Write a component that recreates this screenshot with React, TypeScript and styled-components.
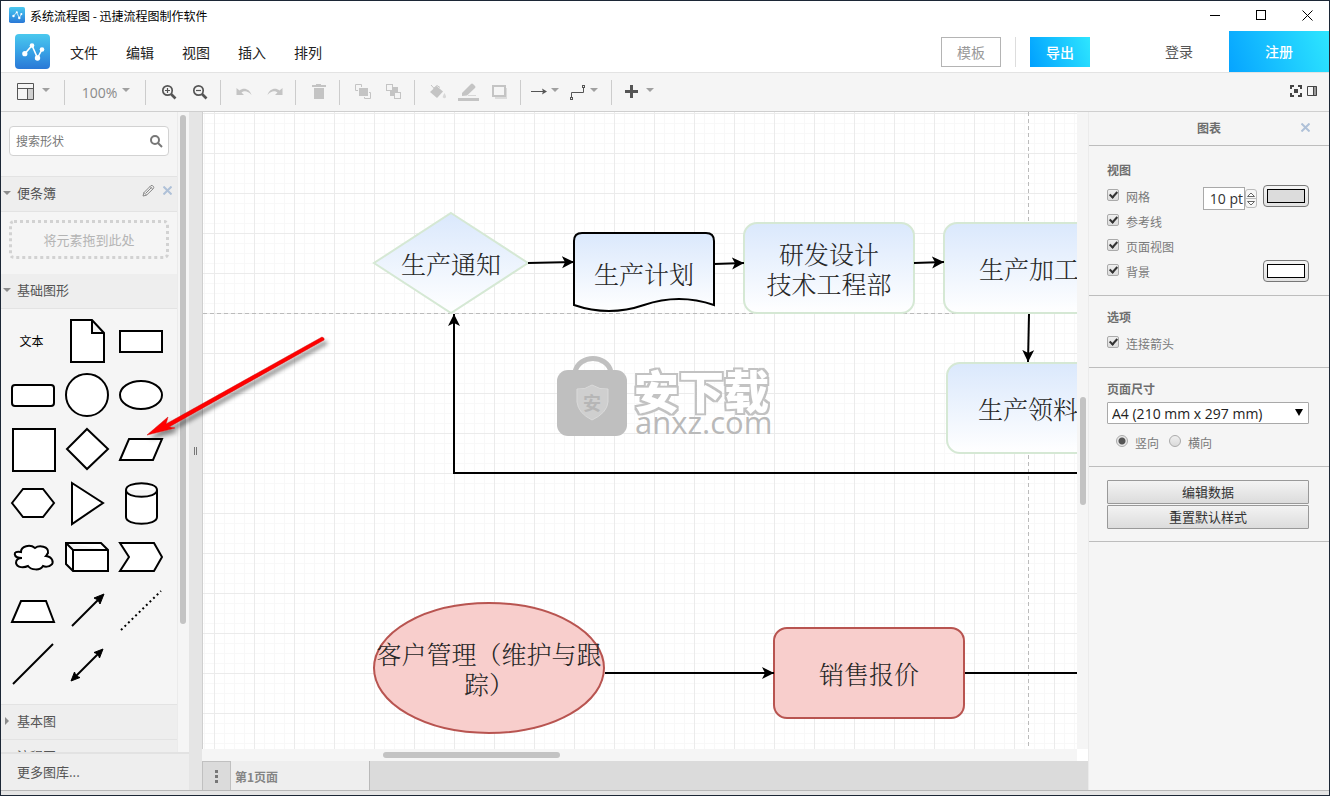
import React from 'react';
import styled, { createGlobalStyle, css } from 'styled-components';

const sans = '"Open Sans", "Noto Sans CJK SC", sans-serif';
const cjk = '"Noto Sans CJK SC", sans-serif';

const GlobalStyle = createGlobalStyle`
  *, *::before, *::after { box-sizing: border-box; }
  body { margin: 0; font-family: ${cjk}; font-size: 12px; color: #666; }
  button, input, select { font-family: inherit; margin: 0; }
  svg { display: block; flex: none; }
`;

/* ---------- window frame ---------- */

const Window = styled.div`
  position: relative;
  display: flex;
  flex-direction: column;
  height: 100vh;
  min-height: 480px;
  overflow: hidden;
  background: #f5f5f5;
  border: 1px solid #1c2736;
`;

const TitleBar = styled.header`
  display: flex;
  align-items: center;
  flex: none;
  height: 30px;
  padding: 0 12px 2px 8px;
  gap: 5px;
  background: #fff;
  color: #000;
  font-size: 12px;
`;

const TitleText = styled.h1`
  flex: 1;
  margin: 0;
  font-size: 12px;
  font-weight: 400;
`;

const WindowButtons = styled.div`
  display: flex;
  gap: 26px;
`;

const PlainButton = styled.button`
  display: flex;
  align-items: center;
  justify-content: center;
  padding: 0;
  border: 0;
  background: none;
  color: inherit;
`;

const WindowButton = styled(PlainButton)`
  width: 20px;
  height: 20px;
`;

/* ---------- menu bar ---------- */

const MenuBar = styled.div`
  display: flex;
  align-items: center;
  flex: none;
  height: 42px;
  padding-left: 14px;
  background: #fff;
  border-bottom: 1px solid #e3e3e3;
`;

const Menus = styled.nav`
  display: flex;
  flex: 1;
  gap: 28px;
  padding-left: 20px;
`;

const MenuItem = styled(PlainButton)`
  font-size: 14px;
  line-height: 20px;
  color: #222;
`;

const ActionButton = styled.button<{ $primary?: boolean }>`
  width: 60px;
  height: 30px;
  padding: 0;
  font-size: 14px;
  line-height: 28px;
  ${(p) =>
    p.$primary
      ? css`
          border: 0;
          color: #fff;
          font-weight: 500;
          background: linear-gradient(70deg, #00a0ff, #2ee6ff);
        `
      : css`
          border: 1px solid #b4b4b4;
          color: #999;
          background: #fff;
        `}
`;

const MenuDivider = styled.span`
  width: 1px;
  height: 30px;
  margin: 0 14px;
  background: #ddd;
`;

const LoginButton = styled(PlainButton)`
  width: 100px;
  height: 38px;
  padding-bottom: 2px;
  margin-left: 39px;
  font-size: 14px;
  color: #555;
`;

const RegisterButton = styled(PlainButton)`
  width: 100px;
  height: 41px;
  padding-bottom: 2px;
  color: #fff;
  font-size: 14px;
  font-weight: 500;
  background: linear-gradient(70deg, #06a4ff, #2ee6ff);
`;

/* ---------- toolbar ---------- */

const Toolbar = styled.div`
  display: flex;
  align-items: center;
  flex: none;
  height: 39px;
  background: #f5f5f5;
  border-bottom: 1px solid #cfcfcf;
`;

const ToolGroup = styled.div<{ $last?: boolean }>`
  display: flex;
  height: 25px;
  padding: 0 5px 0 7px;
  border-right: ${(p) => (p.$last ? '0' : '1px solid #ccc')};
`;

const Tool = styled(PlainButton)<{ $width?: number; $gap?: number; $off?: boolean }>`
  width: ${(p) => p.$width ?? 31}px;
  gap: ${(p) => p.$gap ?? 4}px;
  color: ${(p) => (p.$off ? '#c4c4c4' : '#555')};
`;

const MenuTool = styled(Tool)`
  padding-right: 5px;
`;

const ZoomValue = styled.span`
  padding-top: 1px;
  font-family: ${sans};
  font-size: 14px;
  line-height: 20px;
  color: #8a8a8a;
`;

const Caret = styled.span`
  width: 0;
  height: 0;
  margin-bottom: 4px;
  border: 4px solid transparent;
  border-top-color: #a0a0a0;
  border-bottom: 0;
`;

const ToolbarEnd = styled.div`
  display: flex;
  flex: 1;
  justify-content: flex-end;
  gap: 5px;
  padding: 0 12px 2px 0;
  color: #444;
`;

/* ---------- body ---------- */

const Body = styled.div`
  display: flex;
  flex: 1;
  min-height: 0;
`;

const Sidebar = styled.aside`
  display: flex;
  flex-direction: column;
  flex: none;
  width: 188px;
`;

const SidebarScroll = styled.div`
  display: flex;
  flex: 1;
  min-height: 0;
  overflow: hidden;
`;

const SidebarContent = styled.div`
  flex: 1;
  min-width: 0;
`;

const Track = styled.div<{ $horizontal?: boolean }>`
  display: flex;
  flex: none;
  flex-direction: ${(p) => (p.$horizontal ? 'row' : 'column')};
  padding: 3px;
  background: #f5f5f5;
  ${(p) => (p.$horizontal ? 'height: 12px;' : 'width: 12px;')}
`;

const CanvasTrack = styled(Track)`
  border-bottom: 12px solid #fff;
`;

const SidebarTrack = styled(Track)`
  border-left: 1px solid #ebebeb;
  padding: 3px 3px 3px 2px;
`;

const Thumb = styled.div<{ $before: number; $size: number; $after: number; $horizontal?: boolean }>`
  display: flex;
  flex: 1;
  flex-direction: ${(p) => (p.$horizontal ? 'row' : 'column')};
  &::before { content: ''; flex: ${(p) => p.$before} 0 0; }
  &::after { content: ''; flex: ${(p) => p.$after} 0 0; }
  & > span {
    flex: ${(p) => p.$size} 0 0;
    border-radius: 3px;
    background: #c3c3c3;
  }
`;

const SearchBox = styled.label`
  display: flex;
  align-items: center;
  height: 30px;
  margin: 14px 8px 20px;
  padding: 0 5px 0 6px;
  border: 1px solid #d2d2d2;
  border-radius: 4px;
  background: #fff;
  color: #777;
`;

const SearchInput = styled.input`
  flex: 1;
  min-width: 0;
  padding: 0 0 2px;
  border: 0;
  outline: 0;
  background: none;
  font-size: 12px;
  &::placeholder { color: #777; opacity: 1; }
`;

const SectionHeader = styled.div<{ $line?: boolean }>`
  display: flex;
  align-items: center;
  height: ${(p) => (p.$line ? 36 : 35)}px;
  padding: 0 5px 0 2px;
  border-top: ${(p) => (p.$line ? '1px solid #e3e3e3' : '0')};
  border-bottom: 1px solid #e3e3e3;
  background: #eee;
`;

const SectionToggle = styled(PlainButton)`
  flex: 1;
  justify-content: flex-start;
  margin-bottom: 2px;
  font-size: 13px;
  line-height: 20px;
  color: #555;
`;

const Disclosure = styled.span<{ $open?: boolean }>`
  width: 14px;
  &::before {
    content: '';
    display: block;
    width: 0;
    height: 0;
    border: 4px solid transparent;
    ${(p) =>
      p.$open
        ? 'border-top-color: #8c8c8c; border-bottom: 0;'
        : 'border-left-color: #8c8c8c; border-right: 0; margin-left: 2px;'}
  }
`;

const HeaderTools = styled.div`
  display: flex;
  gap: 8px;
  margin-bottom: 8px;
`;

const DropZone = styled.div`
  display: flex;
  align-items: center;
  justify-content: center;
  height: 39px;
  margin: 8px 8px 15px;
  padding-bottom: 1px;
  border: 3px dotted #d2d2d2;
  border-radius: 5px;
  font-size: 13px;
  color: #b4b4b4;
`;

const Palette = styled.div`
  display: grid;
  grid-template-columns: repeat(3, 54px);
  grid-auto-rows: 54px;
  padding: 5px 5px 12px;
`;

const PaletteItem = styled(PlainButton)`
  font-size: 12px;
  color: #000;
`;

const PaletteText = styled(PaletteItem)`
  padding: 0 3px 2px 0;
`;

const MoreShapes = styled.button`
  flex: none;
  height: 38px;
  padding: 0 0 2px 16px;
  border: 0;
  border-top: 2px solid #e2e2e2;
  background: #eee;
  color: #555;
  font-size: 13px;
  text-align: left;
`;

const Splitter = styled.div`
  display: flex;
  align-items: center;
  justify-content: center;
  flex: none;
  width: 13px;
  background: #e5e5e5;
  &::before {
    content: '';
    width: 3px;
    height: 8px;
    border: 1px solid #777;
    border-width: 0 1px;
  }
`;

const Workspace = styled.main`
  display: flex;
  flex-direction: column;
  flex: 1;
  min-width: 0;
`;

const WorkspaceRow = styled.div`
  display: flex;
  flex: 1;
  min-height: 0;
`;

const CanvasColumn = styled.div`
  display: flex;
  flex-direction: column;
  flex: 1;
  min-width: 0;
`;

const Canvas = styled.div`
  flex: 1;
  min-height: 0;
  overflow: hidden;
  border-left: 1px solid #cfcfcf;
  background-color: #fff;
  background-image:
    linear-gradient(90deg, #ebebeb 1px, transparent 1px),
    linear-gradient(#ebebeb 1px, transparent 1px),
    linear-gradient(90deg, #f8f8f8 1px, transparent 1px),
    linear-gradient(#f8f8f8 1px, transparent 1px);
  background-size: 40px 40px, 40px 40px, 10px 10px, 10px 10px;
  background-position: 11px 1px;
`;

const TabBar = styled.div`
  display: flex;
  flex: none;
  height: 29px;
  background: #dbdbdb;
`;

const PageMenu = styled(PlainButton)`
  flex-direction: column;
  gap: 2px;
  width: 29px;
  border: 1px solid #c0c0c0;
  border-bottom: 0;
  & > i { width: 3px; height: 3px; background: #777; }
`;

const PageTab = styled.button`
  width: 139px;
  padding: 2px 0 0 4px;
  border: 0;
  border-right: 1px solid #b9b9b9;
  background: #eee;
  color: #858585;
  font-size: 12px;
  font-weight: 700;
  text-align: left;
`;

const StatusStrip = styled.footer`
  flex: none;
  height: 5px;
  border-top: 1px solid #b9b9b9;
  background: #e5e5e5;
`;

/* ---------- format panel ---------- */

const Panel = styled.aside`
  flex: none;
  width: 240px;
  background: #f5f5f5;
  box-shadow: -1px 0 #ebebeb;
`;

const PanelTitle = styled.div`
  display: grid;
  grid-template-columns: 1fr auto 1fr;
  align-items: center;
  height: 34px;
  padding: 0 19px 2px;
  border-bottom: 1px solid #bdbdbd;
  font-weight: 700;
  color: #6e6e6e;
  & > :first-child { grid-column: 2; }
  & > :last-child { justify-self: end; }
`;

const Group = styled.section<{ $top: number }>`
  display: flex;
  flex-direction: column;
  padding: ${(p) => p.$top}px 20px 12px 18px;
  border-bottom: 1px solid #bdbdbd;
`;

const GroupTitle = styled.h2`
  margin: 0 0 3px;
  font-size: 12px;
  line-height: 20px;
  font-weight: 700;
  color: #6e6e6e;
`;

const Row = styled.div<{ $inset?: boolean }>`
  display: flex;
  align-items: center;
  height: 25px;
  padding-left: ${(p) => (p.$inset ? 9 : 0)}px;
`;

const OptionLabel = styled.label<{ $gap?: number }>`
  display: flex;
  align-items: center;
  gap: 7px;
  margin: 0 ${(p) => p.$gap ?? 0}px 1px 0;
  color: #7a7a7a;
  line-height: 18px;
  & > span { padding-top: 3px; }
`;

const Check = styled.input`
  position: relative;
  appearance: none;
  width: 12px;
  height: 12px;
  border: 1px solid #aaa;
  border-radius: 2px;
  background: linear-gradient(#efefef, #dcdcdc);
  &:checked::after {
    content: '';
    position: absolute;
    left: 3px;
    top: 0;
    width: 5px;
    height: 8px;
    border: solid #333;
    border-width: 0 2px 2px 0;
    transform: rotate(42deg);
  }
`;

const Radio = styled.input`
  appearance: none;
  width: 12px;
  height: 12px;
  border: 1px solid #aaa;
  border-radius: 6px;
  background: linear-gradient(#efefef, #dadada);
  &:checked {
    background: radial-gradient(circle, #555 3px, #e8e8e8 4px);
  }
`;

const Spacer = styled.span`
  flex: 1;
`;

const GridSize = styled.input`
  width: 42px;
  height: 23px;
  margin-top: 6px;
  padding: 0 1px;
  border: 1px solid #a9a9a9;
  background: #fff;
  color: #333;
  font-family: ${sans};
  font-size: 14px;
  text-align: right;
`;

const Stepper = styled.div`
  display: flex;
  flex-direction: column;
  width: 12px;
  height: 19px;
  margin: 6px 6px 0 0;
  border: 1px solid #bbb;
  border-radius: 3px;
  & > button { flex: 1; }
  & > button + button { border-top: 1px solid #bbb; }
`;

const Swatch = styled.button<{ $color: string }>`
  width: 46px;
  height: 22px;
  padding: 3px;
  border: 1px solid #777;
  border-radius: 4px;
  background: linear-gradient(#f4f4f4, #e2e2e2);
  &::before {
    content: '';
    display: block;
    height: 14px;
    border: 1px solid #000;
    background: ${(p) => p.$color};
  }
`;

const SelectFrame = styled.label`
  position: relative;
  display: block;
  &::after {
    content: '';
    position: absolute;
    right: 6px;
    top: 7px;
    border: 4px solid transparent;
    border-top: 7px solid #000;
    border-bottom: 0;
  }
`;

const PaperSelect = styled.select`
  appearance: none;
  display: block;
  width: 100%;
  height: 22px;
  margin: 0 0 5px;
  padding: 0 4px;
  border: 1px solid #a9a9a9;
  border-radius: 1px;
  background: #fff;
  color: #222;
  font-family: ${sans};
  font-size: 14px;
`;

const ButtonStack = styled.div`
  display: flex;
  flex-direction: column;
  gap: 1px;
  padding-top: 1px;
`;

const WideButton = styled.button`
  height: 24px;
  padding: 0;
  border: 1px solid #999;
  border-radius: 1px;
  background: linear-gradient(#f3f3f3, #dcdcdc);
  color: #333;
  font-size: 13px;
  line-height: 20px;
`;

const Pointer = styled.svg`
  position: absolute;
  left: 139px;
  top: 329px;
  pointer-events: none;
`;

/* ---------- drawings ---------- */

const Logo = ({ size }: { size: number }) => (
  <svg width={size} height={size} viewBox="0 0 35 35" aria-hidden="true">
    <defs>
      <linearGradient id={`logo${size}`} x1="0" y1="0" x2="0" y2="1">
        <stop offset="0" stopColor="#4ac8ee" />
        <stop offset="0.5" stopColor="#38a3e6" />
        <stop offset="1" stopColor="#2a78d6" />
      </linearGradient>
    </defs>
    <rect width="35" height="35" rx="4" fill={`url(#logo${size})`} />
    <path d="M10 19.500L17 11.500L22.500 24L27 15.500" fill="none" stroke="#fff" strokeWidth="1.600" />
    <g fill="#fff">
      <circle cx="9.800" cy="19.700" r="2.600" />
      <circle cx="17" cy="11.500" r="2.300" />
      <circle cx="22.500" cy="24" r="2.700" />
      <circle cx="27" cy="15.500" r="2.300" />
    </g>
  </svg>
);

const Cross = () => (
  <svg width="9" height="9" viewBox="0 0 9 9" aria-hidden="true">
    <path d="M0.500 0.500L8.500 8.500M8.500 0.500L0.500 8.500" stroke="#afc1d8" strokeWidth="2" />
  </svg>
);

const icons: Record<string, React.ReactNode> = {
  zoomIn: (
    <g fill="none" stroke="currentColor">
      <circle cx="6.500" cy="6.500" r="4.700" strokeWidth="1.700" />
      <path d="M10 10L14.500 14.500" strokeWidth="2.600" />
      <path d="M4 6.500H9M6.500 4V9" strokeWidth="1.200" />
    </g>
  ),
  zoomOut: (
    <g fill="none" stroke="currentColor">
      <circle cx="6.500" cy="6.500" r="4.700" strokeWidth="1.700" />
      <path d="M10 10L14.500 14.500" strokeWidth="2.600" />
      <path d="M4 6.500H9" strokeWidth="1.200" />
    </g>
  ),
  undo: <path d="M0.500 4V11H8L5.500 8.500C8 6.400 12 6.500 15.500 11C13.500 4.500 7.500 3 3.500 6.500Z" fill="currentColor" />,
  redo: <path d="M15.500 4V11H8L10.500 8.500C8 6.400 4 6.500 .5 11C2.500 4.500 8.500 3 12.500 6.500Z" fill="currentColor" />,
  trash: <path d="M1 1H5V0H10V1H15V3H1ZM3 4H13V15H3Z" fill="currentColor" />,
  front: (
    <g>
      <rect x="4" y="4" width="9" height="8" fill="currentColor" />
      <path d="M3 6.500H0.500V0.500H6.500V3M9.500 13V14.500H15.500V8.500H14" fill="none" stroke="currentColor" />
    </g>
  ),
  back: (
    <g>
      <path d="M7 3H12V8H9V12H4V7H7Z" fill="currentColor" />
      <rect x="0.500" y="0.500" width="6" height="6" fill="#f5f5f5" stroke="currentColor" />
      <rect x="8.500" y="8.500" width="6" height="6" fill="#f5f5f5" stroke="currentColor" />
    </g>
  ),
  fill: (
    <g>
      <path d="M0 8L6.500 2L13 7.500L7 14Z" fill="currentColor" />
      <path d="M1 1L6.500 7M3.500 4.500L7 1.500L10 3.500" fill="none" stroke="currentColor" />
      <path d="M14.500 9Q12.500 12 12.800 13.200Q14.500 15.500 16 13.200Q16.300 12 14.500 9" fill="currentColor" opacity="0.600" />
    </g>
  ),
  arrow: (
    <g>
      <path d="M0 7.500H14" stroke="currentColor" />
      <path d="M11 4.500L16 7.500L11 10.500L12 7.500Z" fill="currentColor" />
    </g>
  ),
  connector: (
    <g fill="#f5f5f5" stroke="currentColor">
      <path d="M1.500 13V8.500H13.500V4" fill="none" />
      <rect x="0.500" y="13.500" width="2" height="2" />
      <rect x="12.500" y="1.500" width="2" height="2" />
    </g>
  ),
  plus: <path d="M6 1H9V6H14V9H9V14H6V9H1V6H6Z" fill="currentColor" />,
};

const Icon = ({ name }: { name: string }) => (
  <svg width="16" height="16" viewBox="0 0 16 16" aria-hidden="true">
    {icons[name]}
  </svg>
);

const shapes: { name: string; art: React.ReactNode }[] = [
  { name: '便笺', art: <path d="M11 6H32L44 19V48H11ZM32 6V19H44" /> },
  { name: '矩形', art: <rect x="6" y="17" width="42" height="21" /> },
  { name: '圆角矩形', art: <rect x="6" y="17" width="42" height="21" rx="3" /> },
  { name: '圆形', art: <circle cx="27" cy="27" r="21" /> },
  { name: '椭圆', art: <ellipse cx="27" cy="27" rx="21" ry="14" /> },
  { name: '正方形', art: <rect x="7" y="7" width="42" height="42" /> },
  { name: '菱形', art: <path d="M27 7L48 27L27 47L7 27Z" /> },
  { name: '平行四边形', art: <path d="M6 38L15 17H48L39 38Z" /> },
  { name: '六边形', art: <path d="M6 27L17 13H37L48 27L37 41H17Z" /> },
  { name: '三角形', art: <path d="M12 7L43 27L12 48Z" /> },
  { name: '圆柱', art: <path d="M12 14C12 5 43 5 43 14V41C43 50 12 50 12 41ZM12 14C12 23 43 23 43 14" /> },
  {
    name: '云',
    art: (
      <path d="M15 22C15 16 24 14 29 18C33 15 43 16 42 23C41 24 41 25 40 26C47 27 48 33 45 35C43 37 39 37 37 36C34 41 25 40 22 36C18 38 11 38 10 33C10 30 12 28 16 28C7 28 6 20 15 22Z" />
    ),
  },
  { name: '立方体', art: <path d="M6 13H41L48 20V41H13L6 34ZM6 13L13 20H48M13 20V41" /> },
  { name: '步骤', art: <path d="M6 13H40L48 27L40 41H6L15 27Z" /> },
  { name: '梯形', art: <path d="M6 38L15 17H40L48 38Z" /> },
  {
    name: '箭头',
    art: (
      <g>
        <path d="M12 42L38 16" />
        <path d="M44 10L40 20L38 16L34 14Z" fill="#000" strokeWidth="1" />
      </g>
    ),
  },
  { name: '虚线', art: <path d="M7 46L47 7" strokeDasharray="2 3" /> },
  { name: '直线', art: <path d="M7 46L47 6" /> },
  {
    name: '双向箭头',
    art: (
      <g>
        <path d="M15 39L39 15" />
        <path d="M43 11L39.500 20L38 16L34 14.500ZM11 43L14.500 34L16 38L20 39.500Z" fill="#000" strokeWidth="1" />
      </g>
    ),
  },
];

const NodeText = styled.text`
  font-family: SimSun, 'Noto Serif CJK SC', 'Noto Sans CJK SC', serif;
  font-size: 25px;
  font-weight: 300;
  fill: #262626;
  text-anchor: middle;
`;

const MarkTitle = styled.text`
  font-family: ${cjk};
  font-size: 45px;
  font-weight: 900;
  fill: #fff;
`;

const MarkUrl = styled.text`
  font-family: ${sans};
  font-size: 31px;
  font-weight: 400;
  fill: #b9b9b9;
`;

const Diagram = () => (
  <svg width="875" height="638" role="img" aria-label="系统流程图">
    <defs>
      <linearGradient id="blue" x1="0" y1="0" x2="0" y2="1">
        <stop offset="0" stopColor="#dae8fc" />
        <stop offset="1" stopColor="#fff" />
      </linearGradient>
      <marker id="head" markerUnits="userSpaceOnUse" markerWidth="14" markerHeight="14" refX="12" refY="6" orient="auto">
        <path d="M12 6L0 12L3 6L0 0Z" />
      </marker>
      <filter id="outline" x="-5%" y="-10%" width="110%" height="120%">
        <feMorphology in="SourceAlpha" operator="dilate" radius="2" result="wide" />
        <feFlood floodColor="#c2c2c2" />
        <feComposite in2="wide" operator="in" result="edge" />
        <feMerge>
          <feMergeNode in="edge" />
          <feMergeNode in="SourceGraphic" />
        </feMerge>
      </filter>
    </defs>
    <g transform="translate(-203 -112)">
      <path d="M203 313.500H1078M1028.500 112V750" stroke="#bbb" strokeDasharray="4 3" />
      <g fill="url(#blue)" stroke="#d5e8d4" strokeWidth="2">
        <path d="M451 213L528 263L451 313L374 263Z" />
        <rect x="744" y="223" width="170" height="90" rx="13" />
        <rect x="944" y="223" width="170" height="90" rx="13" />
        <rect x="947" y="363" width="170" height="90" rx="13" />
        <path d="M574 305V241Q574 233 582 233H706Q714 233 714 241V305Q679 293 644 305Q609 317 574 305Z" stroke="#000" />
      </g>
      <g fill="#f8cecc" stroke="#b85450" strokeWidth="2">
        <ellipse cx="489" cy="668" rx="115" ry="65" />
        <rect x="774" y="628" width="190" height="90" rx="13" />
      </g>
      <g fill="none" stroke="#000" strokeWidth="2">
        <path d="M528 263L574 262" markerEnd="url(#head)" />
        <path d="M714 264L744 263" markerEnd="url(#head)" />
        <path d="M914 263L944 262" markerEnd="url(#head)" />
        <path d="M1029 314L1028 362" markerEnd="url(#head)" />
        <path d="M1078 473H454V314" markerEnd="url(#head)" />
        <path d="M605 673H774" markerEnd="url(#head)" />
        <path d="M965 673H1078" />
      </g>
      <NodeText x="451" y="274">生产通知</NodeText>
      <NodeText x="644" y="284">生产计划</NodeText>
      <NodeText x="829" y="264">研发设计</NodeText>
      <NodeText x="829" y="294">技术工程部</NodeText>
      <NodeText x="1029" y="279">生产加工</NodeText>
      <NodeText x="1028" y="419">生产领料</NodeText>
      <NodeText x="489" y="664">客户管理（维护与跟</NodeText>
      <NodeText x="489" y="694">踪）</NodeText>
      <NodeText x="869" y="684">销售报价</NodeText>
      <g>
        <path d="M575 372C579 354 607 354 611 372" fill="none" stroke="#c0c0c0" strokeWidth="5" />
        <rect x="557" y="370" width="70" height="66" rx="11" fill="#bfbfbf" />
        <path d="M592 385Q600 390 608 389V402Q607 413 592 420Q578 413 577 402V389Q585 390 592 385Z" fill="#cfcfcf" stroke="#dadada" />
        <text x="592" y="410" fontFamily="Noto Sans CJK SC, sans-serif" fontSize="18" fontWeight="700" textAnchor="middle" fill="#b6b6b6">安</text>
      </g>
      <MarkTitle x="634" y="409" filter="url(#outline)">安下载</MarkTitle>
      <MarkUrl x="635" y="434">anxz.com</MarkUrl>
    </g>
  </svg>
);

const viewOptions = ['网格', '参考线', '页面视图', '背景'];

export default function App() {
  return (
    <Window>
      <GlobalStyle />
      <TitleBar>
        <Logo size={16} />
        <TitleText>系统流程图 - 迅捷流程图制作软件</TitleText>
        <WindowButtons>
          <WindowButton aria-label="最小化">
            <svg width="11" height="11"><path d="M0 5.500H10" stroke="#000" /></svg>
          </WindowButton>
          <WindowButton aria-label="最大化">
            <svg width="11" height="11"><rect x="0.500" y="0.500" width="9" height="9" fill="none" stroke="#000" /></svg>
          </WindowButton>
          <WindowButton aria-label="关闭">
            <svg width="11" height="11"><path d="M0.500 0.500L10.500 10.500M10.500 0.500L0.500 10.500" stroke="#000" /></svg>
          </WindowButton>
        </WindowButtons>
      </TitleBar>

      <MenuBar>
        <Logo size={35} />
        <Menus>
          {['文件', '编辑', '视图', '插入', '排列'].map((m) => (
            <MenuItem key={m}>{m}</MenuItem>
          ))}
        </Menus>
        <ActionButton>模板</ActionButton>
        <MenuDivider />
        <ActionButton $primary>导出</ActionButton>
        <LoginButton>登录</LoginButton>
        <RegisterButton>注册</RegisterButton>
      </MenuBar>

      <Toolbar>
        <ToolGroup>
          <Tool $width={51} $gap={7} aria-label="布局">
            <svg width="18" height="18">
              <path d="M11 6H17V17H11Z" fill="#d0d0d0" />
              <path d="M0.500 0.500H16.500V16.500H0.500ZM0.500 5.500H16.500M10.500 5.500V16.500" fill="none" stroke="#555" />
            </svg>
            <Caret />
          </Tool>
        </ToolGroup>
        <ToolGroup>
          <Tool $width={68} $gap={5}><ZoomValue>100%</ZoomValue><Caret /></Tool>
        </ToolGroup>
        <ToolGroup>
          <Tool aria-label="放大"><Icon name="zoomIn" /></Tool>
          <Tool aria-label="缩小"><Icon name="zoomOut" /></Tool>
        </ToolGroup>
        <ToolGroup>
          <Tool $off aria-label="撤销"><Icon name="undo" /></Tool>
          <Tool $off aria-label="重做"><Icon name="redo" /></Tool>
        </ToolGroup>
        <ToolGroup>
          <Tool $off aria-label="删除"><Icon name="trash" /></Tool>
        </ToolGroup>
        <ToolGroup>
          <Tool $off aria-label="置前"><Icon name="front" /></Tool>
          <Tool $off aria-label="置后"><Icon name="back" /></Tool>
        </ToolGroup>
        <ToolGroup>
          <Tool $off aria-label="填充颜色"><Icon name="fill" /></Tool>
          <Tool $off aria-label="线条颜色">
            <svg width="21" height="18">
              <path d="M4 13V10L13 1Q14 0 15 1L17 3Q18 4 17 5L9 12.500Z" fill="currentColor" />
              <path d="M10 12.500H18" stroke="currentColor" opacity="0.600" />
              <rect y="15" width="21" height="3" fill="currentColor" />
            </svg>
          </Tool>
          <Tool $off aria-label="阴影">
            <svg width="16" height="14">
              <rect x="3" y="3" width="12" height="11" fill="#dcdcdc" />
              <rect x="1" y="1" width="12" height="10" fill="#f5f5f5" stroke="currentColor" strokeWidth="2" />
            </svg>
          </Tool>
        </ToolGroup>
        <ToolGroup>
          <MenuTool $width={39} aria-label="连接"><Icon name="arrow" /><Caret /></MenuTool>
          <MenuTool $width={39} aria-label="航点"><Icon name="connector" /><Caret /></MenuTool>
        </ToolGroup>
        <ToolGroup $last>
          <Tool $width={39} $gap={6} aria-label="插入"><Icon name="plus" /><Caret /></Tool>
        </ToolGroup>
        <ToolbarEnd>
          <PlainButton aria-label="全屏">
            <svg width="12" height="12">
              <path d="M1 4V1H4M8 1H11V4M11 8V11H8M4 11H1V8" fill="none" stroke="currentColor" strokeWidth="2" />
              <rect x="4" y="4" width="4" height="4" fill="currentColor" />
            </svg>
          </PlainButton>
          <PlainButton aria-label="格式">
            <svg width="10" height="10">
              <rect x="6" y="0" width="4" height="10" fill="#999" />
              <path d="M0.500 0.500H9.500V9.500H0.500ZM6.500 0V10" fill="none" stroke="currentColor" />
            </svg>
          </PlainButton>
        </ToolbarEnd>
      </Toolbar>

      <Body>
        <Sidebar>
          <SidebarScroll>
            <SidebarContent>
              <SearchBox>
                <SearchInput placeholder="搜索形状" aria-label="搜索形状" />
                <svg width="13" height="13">
                  <circle cx="5" cy="5" r="4" fill="none" stroke="#777" strokeWidth="2" />
                  <path d="M8 8L12 12" stroke="#777" strokeWidth="2" />
                </svg>
              </SearchBox>
              <SectionHeader $line>
                <SectionToggle><Disclosure $open />便条簿</SectionToggle>
                <HeaderTools>
                  <PlainButton aria-label="编辑">
                    <svg width="13" height="13">
                      <path d="M1 12L2 8.500L9 1.500Q10 1 11.500 2.500Q12 3.500 11.500 4.500L4.500 11.200ZM2 8.500L4.500 11M8 2.500L10.500 5M4 9L9.500 3.500" fill="none" stroke="#888" />
                    </svg>
                  </PlainButton>
                  <PlainButton aria-label="关闭"><Cross /></PlainButton>
                </HeaderTools>
              </SectionHeader>
              <DropZone>将元素拖到此处</DropZone>
              <SectionHeader>
                <SectionToggle><Disclosure $open />基础图形</SectionToggle>
              </SectionHeader>
              <Palette>
                <PaletteText>文本</PaletteText>
                {shapes.map((s) => (
                  <PaletteItem key={s.name} aria-label={s.name}>
                    <svg width="54" height="54" fill="#fff" stroke="#000" strokeWidth="2">{s.art}</svg>
                  </PaletteItem>
                ))}
              </Palette>
              <SectionHeader $line>
                <SectionToggle><Disclosure />基本图</SectionToggle>
              </SectionHeader>
              <SectionHeader>
                <SectionToggle><Disclosure />流程图</SectionToggle>
              </SectionHeader>
            </SidebarContent>
            <SidebarTrack>
              <Thumb $before={0} $size={509} $after={125}><span /></Thumb>
            </SidebarTrack>
          </SidebarScroll>
          <MoreShapes>更多图库...</MoreShapes>
        </Sidebar>
        <Splitter />

        <Workspace>
          <WorkspaceRow>
            <CanvasColumn>
              <Canvas><Diagram /></Canvas>
              <Track $horizontal>
                <Thumb $horizontal $before={178} $size={177} $after={514}><span /></Thumb>
              </Track>
            </CanvasColumn>
            <CanvasTrack>
              <Thumb $before={282} $size={108} $after={241}><span /></Thumb>
            </CanvasTrack>
          </WorkspaceRow>
          <TabBar>
            <PageMenu aria-label="页面"><i /><i /><i /></PageMenu>
            <PageTab>第1页面</PageTab>
          </TabBar>
        </Workspace>

        <Panel>
          <PanelTitle>
            <span>图表</span>
            <PlainButton aria-label="关闭"><Cross /></PlainButton>
          </PanelTitle>
          <Group $top={14}>
            <GroupTitle>视图</GroupTitle>
            {viewOptions.map((name) => (
              <Row key={name}>
                <OptionLabel><Check type="checkbox" defaultChecked /><span>{name}</span></OptionLabel>
                <Spacer />
                {name === '网格' && (
                  <>
                    <GridSize defaultValue="10 pt" aria-label="网格大小" />
                    <Stepper>
                      <PlainButton aria-label="增加">
                        <svg width="8" height="5"><path d="M0.500 4.500L4 1L7.500 4.500Z" fill="#fff" stroke="#666" /></svg>
                      </PlainButton>
                      <PlainButton aria-label="减少">
                        <svg width="8" height="5"><path d="M0.500 0.500L4 4L7.500 0.500Z" fill="#fff" stroke="#666" /></svg>
                      </PlainButton>
                    </Stepper>
                    <Swatch $color="#dcdcdc" aria-label="网格颜色" />
                  </>
                )}
                {name === '背景' && <Swatch $color="#fff" aria-label="背景颜色" />}
              </Row>
            ))}
          </Group>
          <Group $top={11}>
            <GroupTitle>选项</GroupTitle>
            <Row>
              <OptionLabel><Check type="checkbox" defaultChecked /><span>连接箭头</span></OptionLabel>
            </Row>
          </Group>
          <Group $top={11}>
            <GroupTitle>页面尺寸</GroupTitle>
            <SelectFrame>
              <PaperSelect aria-label="页面尺寸">
                <option>A4 (210 mm x 297 mm)</option>
              </PaperSelect>
            </SelectFrame>
            <Row $inset>
              <OptionLabel $gap={10}><Radio type="radio" name="orient" defaultChecked /><span>竖向</span></OptionLabel>
              <OptionLabel><Radio type="radio" name="orient" /><span>横向</span></OptionLabel>
            </Row>
          </Group>
          <Group $top={12}>
            <ButtonStack>
              <WideButton>编辑数据</WideButton>
              <WideButton>重置默认样式</WideButton>
            </ButtonStack>
          </Group>
        </Panel>
      </Body>
      <StatusStrip />

      <Pointer width="200" height="120" aria-hidden="true">
        <defs>
          <filter id="soft" x="-10%" y="-10%" width="130%" height="140%">
            <feDropShadow dx="3" dy="4" stdDeviation="2" floodColor="#000" floodOpacity="0.450" />
          </filter>
        </defs>
        <path d="M7 105L28 87L26 94L182 7Q185 8 184 10L29 97L35 98Z" fill="#f00" stroke="#c11" strokeWidth="0.500" filter="url(#soft)" />
      </Pointer>
    </Window>
  );
}
